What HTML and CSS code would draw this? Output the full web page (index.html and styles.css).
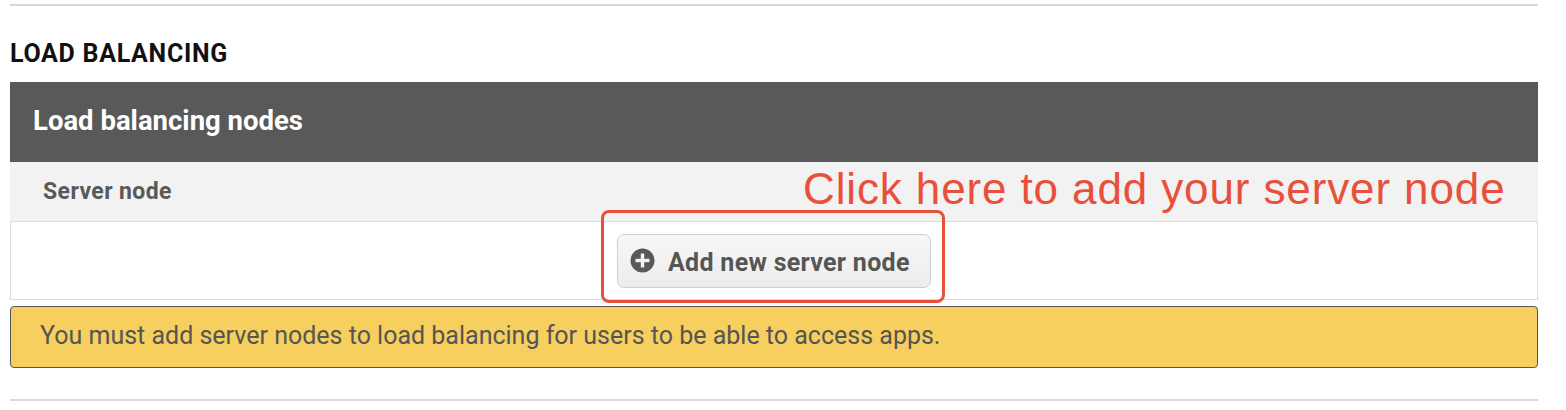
FILE: index.html
```html
<!DOCTYPE html>
<html>
<head>
<meta charset="utf-8">
<link rel="stylesheet" href="styles.css">
</head>
<body>
<div class="page">
  <hr class="rule">
  <h2 class="section-title">LOAD BALANCING</h2>
  <div class="panel">
    <div class="panel-header">Load balancing nodes</div>
    <div class="col-header">Server node</div>
    <div class="panel-body">
      <button class="add-btn">
        <svg class="plus" width="25" height="25" viewBox="0 0 25 25">
          <circle cx="12.5" cy="12.5" r="12" fill="#595959"/>
          <rect x="10.8" y="5.5" width="3.4" height="14" fill="#f2f2f2"/>
          <rect x="5.5" y="10.8" width="14" height="3.4" fill="#f2f2f2"/>
        </svg>
        <span class="btn-label">Add new server node</span>
      </button>
    </div>
    <div class="annotation-box"></div>
    <div class="annotation-text">Click here to add your server node</div>
  </div>
  <div class="alert">You must add server nodes to load balancing for users to be able to access apps.</div>
  <hr class="rule bottom">
</div>
</body>
</html>
```
FILE: styles.css
```css
html, body {
  margin: 0;
  padding: 0;
  background: #ffffff;
}
.page {
  margin-left: 10px;
  width: 1528px;
  padding-top: 4px;
  font-family: Roboto, "Liberation Sans", sans-serif;
}
.rule {
  margin: 0;
  border: 0;
  height: 2px;
  background: #d9d9d9;
}
.section-title {
  margin: 0;
  height: 76px;
  box-sizing: border-box;
  padding-top: 33px;
  font-size: 25px;
  line-height: 30px;
  font-weight: 700;
  color: #111;
  letter-spacing: 0.7px;
}
.panel {
  position: relative;
}
.panel-header {
  height: 80px;
  background: #595959;
  color: #fff;
  font-size: 27.5px;
  font-weight: 700;
  line-height: 78px;
  padding-left: 23px;
}
.col-header {
  height: 59px;
  background: #f2f2f2;
  border-bottom: 1px solid #dcdcdc;
  color: #595959;
  font-size: 23px;
  font-weight: 700;
  line-height: 60px;
  padding-left: 33px;
  letter-spacing: 0.4px;
}
.panel-body {
  height: 77px;
  border: 1px solid #dcdcdc;
  border-top: 0;
  display: flex;
  align-items: center;
  justify-content: center;
}
.add-btn {
  display: flex;
  align-items: center;
  gap: 13px;
  height: 54px;
  width: 314px;
  box-sizing: border-box;
  padding: 0 0 0 12px;
  border: 1px solid #cfcfcf;
  border-radius: 7px;
  background: linear-gradient(#f7f7f7, #ececec);
  font-family: Roboto, "Liberation Sans", sans-serif;
  font-size: 25px;
  font-weight: 700;
  color: #555;
  letter-spacing: 0.3px;
}
.btn-label {
  padding-top: 3px;
}
.plus {
  display: block;
  flex: none;
}
.annotation-box {
  position: absolute;
  left: 591px;
  top: 128px;
  width: 344px;
  height: 93px;
  box-sizing: border-box;
  border: 3px solid #e9503b;
  border-radius: 8px;
}
.annotation-text {
  position: absolute;
  left: 793px;
  top: 82px;
  font-family: "Liberation Sans", Arial, sans-serif;
  font-size: 44px;
  line-height: 50px;
  letter-spacing: 0.88px;
  color: #e9503b;
  white-space: nowrap;
}
.alert {
  margin-top: 6px;
  height: 62px;
  box-sizing: border-box;
  background: #f6cf5e;
  border: 1px solid #555;
  border-radius: 4px;
  padding-left: 29px;
  line-height: 58px;
  font-size: 25px;
  color: #555;
}
.bottom {
  margin-top: 31px;
}
```
